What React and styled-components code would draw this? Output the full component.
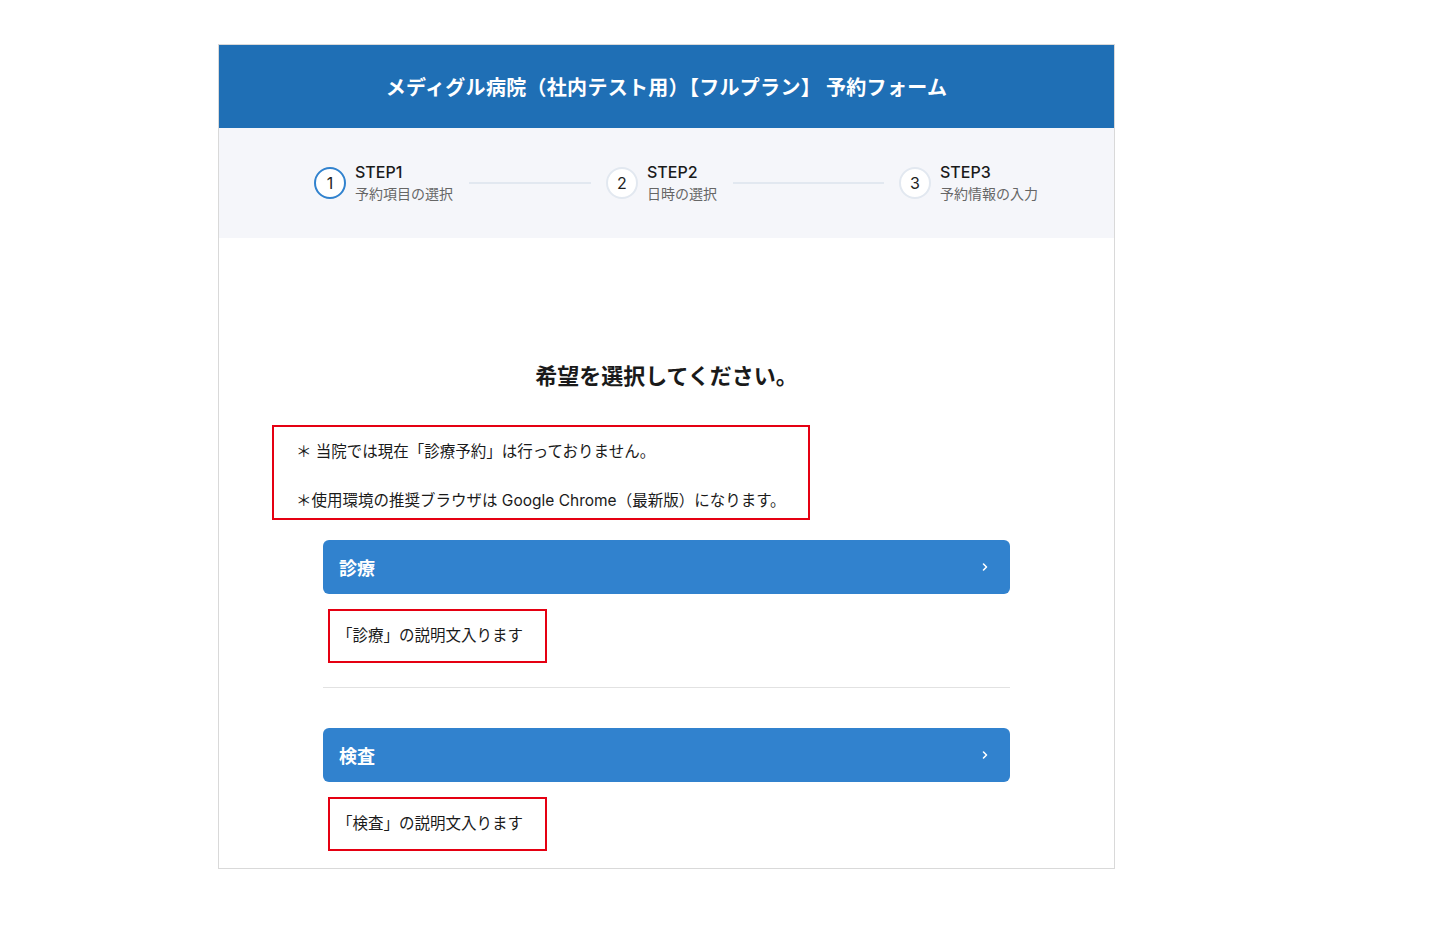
import React from "react";
import styled, { createGlobalStyle } from "styled-components";

const Global = createGlobalStyle`
  body { margin: 0; background: #fff; font-family: Inter, "Noto Sans CJK JP", sans-serif; color: #1a1a1a; }
`;
const Page = styled.div`padding: 44px 0 0 218px;`;
const Card = styled.div`width: 897px; height: 825px; border: 1px solid #d9d9d9; box-sizing: border-box; overflow: hidden;`;
const Header = styled.div`height: 83px; background: #1f6fb5; color: #fff; display: flex; align-items: center; justify-content: center; font-size: 20px; font-weight: 700; letter-spacing: 0.3px;`;
const Steps = styled.div`height: 110px; background: #f5f6fa; display: flex; align-items: center; padding-left: 95px;`;
const Step = styled.div`display: flex; align-items: center; gap: 9px;`;
const Circle = styled.div`
  width: 28px; height: 28px; border-radius: 50%; display: flex; align-items: center; justify-content: center;
  font-size: 16px; border: 2px solid ${p => p.$active ? "#3182ce" : "#e2e8f0"}; background: #fff; color: #222;`;
const StepText = styled.div`display: flex; flex-direction: column; line-height: 22px;`;
const StepTitle = styled.div`font-size: 16px; font-weight: 500; color: #1a1a1a;`;
const StepSub = styled.div`font-size: 14px; color: #666;`;
const Line = styled.div`height: 2px; width: ${p => p.$w}px; background: #e2e8f0; margin: 0 15px 0 16px;`;
const Body = styled.div`display: flex; flex-direction: column; align-items: center;`;
const Title = styled.h2`margin: 124px 0 0; font-size: 22px; font-weight: 700; line-height: 28px;`;
const Notice = styled.div`
  align-self: flex-start; margin: 35px 0 0 53px; width: 538px; height: 95px; box-sizing: border-box;
  border: 2px solid #e50012; padding: 13px 0 0 22px; font-size: 15.5px; line-height: 24px;
  display: flex; flex-direction: column; gap: 25px;`;
const Section = styled.div`width: 687px; display: flex; flex-direction: column;`;
const Button = styled.button`
  height: 54px; border: 0; border-radius: 6px; background: #3182ce; color: #fff; font: inherit;
  font-size: 18px; font-weight: 700; display: flex; align-items: center; justify-content: space-between;
  padding: 0 20px 0 16px; cursor: pointer;`;
const Desc = styled.div`
  margin: 15px 0 0 5px; width: 219px; height: 54px; box-sizing: border-box; border: 2px solid #e50012;
  display: flex; align-items: center; padding: 0 0 4px 7px; font-size: 15.5px;`;
const Divider = styled.hr`width: 100%; border: 0; border-top: 1px solid #e2e2e2; margin: 24px 0 40px;`;

const Chevron = () => (
  <svg width="10" height="10" viewBox="0 0 10 10"><path d="M3.5 2l3 3-3 3" fill="none" stroke="#fff" strokeWidth="1.6" strokeLinecap="round" strokeLinejoin="round"/></svg>
);

export default function App() {
  return (
    <Page>
      <Global />
      <Card>
        <Header>メディグル病院（社内テスト用）【フルプラン】 予約フォーム</Header>
        <Steps>
          <Step><Circle $active>1</Circle><StepText><StepTitle>STEP1</StepTitle><StepSub>予約項目の選択</StepSub></StepText></Step>
          <Line $w={122} />
          <Step><Circle>2</Circle><StepText><StepTitle>STEP2</StepTitle><StepSub>日時の選択</StepSub></StepText></Step>
          <Line $w={151} />
          <Step><Circle>3</Circle><StepText><StepTitle>STEP3</StepTitle><StepSub>予約情報の入力</StepSub></StepText></Step>
        </Steps>
        <Body>
          <Title>希望を選択してください。</Title>
          <Notice>
            <div>＊ 当院では現在「診療予約」は行っておりません。</div>
            <div>＊使用環境の推奨ブラウザは Google Chrome（最新版）になります。</div>
          </Notice>
          <Section style={{ marginTop: 20 }}>
            <Button>診療<Chevron /></Button>
            <Desc>「診療」の説明文入ります</Desc>
            <Divider />
            <Button>検査<Chevron /></Button>
            <Desc>「検査」の説明文入ります</Desc>
          </Section>
        </Body>
      </Card>
    </Page>
  );
}
